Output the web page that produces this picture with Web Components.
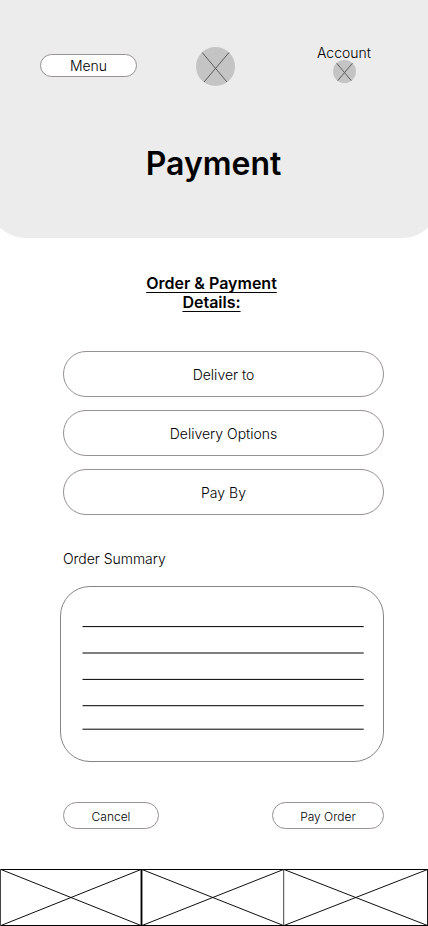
<!DOCTYPE html>
<html lang="en">
<head>
<meta charset="utf-8">
<title>Payment</title>
<style>
html,body{margin:0;padding:0;background:#fff}
body{font-family:Inter,"Liberation Sans",sans-serif;color:#000;overflow:hidden}
</style>
</head>
<body>
<payment-page></payment-page>
<script>
const define = (name, html) => customElements.define(name, class extends HTMLElement {
  constructor() {
    super();
    this.attachShadow({ mode: "open" }).innerHTML = html;
  }
});

define("pill-button", `
<style>
:host{display:block;box-sizing:border-box}
button{all:unset;box-sizing:border-box;display:flex;align-items:center;justify-content:center;width:100%;height:100%;border:1px solid #969193;border-radius:999px;background:#fff;font-weight:300;padding-top:var(--drop,0);white-space:nowrap}
</style><button><slot></slot></button>`);

define("crossed-circle", `
<style>
:host{display:block}
svg{display:block;width:100%;height:100%}
</style>
<svg viewBox="0 0 39 39"><circle cx="19.5" cy="19.5" r="19.5" fill="#c4c4c4"/><path d="M6.2 5.5L31 35M33 5.5L8 35" stroke="#5c5c5c" fill="none" vector-effect="non-scaling-stroke"/></svg>`);

define("page-header", `
<style>
:host{display:block;height:238px;margin:0 -10px;padding:0 10px;background:#ececec;border-radius:0 0 35px 35px}
nav{display:grid;grid-template-columns:97px 39px 56px;column-gap:59px;padding:45px 0 0 40px;height:102px;box-sizing:border-box;align-items:start}
pill-button{height:23px;margin-top:9px;font-size:14px}
.logo{width:39px;height:39px;margin-top:2px}
.account{margin:-1px 0 0 22px;width:56px;display:flex;flex-direction:column;align-items:center;font-size:14px;line-height:17px;font-weight:300}
.account crossed-circle{width:23px;height:23px;margin:-1px 0 0 1px}
h1{margin:42px 0 0;padding-right:1px;text-align:center;font-size:32px;line-height:40px;font-weight:600}
</style>
<nav><pill-button>Menu</pill-button><crossed-circle class="logo"></crossed-circle>
<div class="account"><span>Account</span><crossed-circle></crossed-circle></div></nav>
<h1><slot></slot></h1>`);

define("order-summary", `
<style>
:host{display:block}
h3{margin:0 0 0 3px;font-size:14px;line-height:17px;font-weight:300;letter-spacing:-.04px}
.card{box-sizing:border-box;width:324px;height:176px;margin-top:19px;border:1px solid #858585;border-radius:30px}
svg{display:block;width:322px;height:174px}
</style>
<h3><slot></slot></h3>
<div class="card"><svg viewBox="61 587 322 174"><path d="M82.5 626.6H363.7M82.5 653H363.7M82.5 679.4H363.7M82.5 705.7H363.7M82.5 729.2H363.7" stroke="#000"/></svg></div>`);

define("tab-placeholders", `
<style>
:host{display:block}
svg{display:block;width:428px;height:58px}
</style>
<svg viewBox="0 868 428 58" fill="none" stroke="#000"><path d="M0 869.5H428M0 925.5H428M141.5 869V926" stroke-width="1.1"/><path d="M.5 869V926M283.7 869V926" stroke="#444"/><path d="M141.5 869V926" stroke-width="1.8"/><path d="M427.6 869V926"/><path d="M1 869.5L141 925.5M1 925.5L141 869.5M142 869.5L283.5 925.5M142 925.5L283.5 869.5M284 869.5L427.5 925.5M284 925.5L427.5 869.5" stroke-width=".95"/></svg>`);

define("payment-page", `
<style>
:host{display:flex;flex-direction:column;width:428px;height:926px;overflow:hidden;background:#fff}
page-header{flex:none}
h2{margin:36px 0 0 -5px;text-align:center;font-size:16px;line-height:19px;font-weight:600;text-decoration:underline;text-decoration-thickness:1.3px;text-underline-offset:3px;text-decoration-skip-ink:none}
.options{display:grid;gap:13px;margin:39px 44px 0 63px}
.options pill-button{height:46px;font-size:14px;--drop:1px}
order-summary{margin:35px 0 0 60px}
.actions{display:flex;justify-content:space-between;margin:40px 44px 0 63px;font-size:12px}
.actions pill-button{height:27px;width:96px;--drop:1px}
.actions pill-button:last-child{width:112px}
tab-placeholders{margin-top:auto}
</style>
<page-header>Payment</page-header>
<h2>Order &amp; Payment<br>Details:</h2>
<div class="options"><pill-button>Deliver to</pill-button><pill-button>Delivery Options</pill-button><pill-button>Pay By</pill-button></div>
<order-summary>Order Summary</order-summary>
<div class="actions"><pill-button>Cancel</pill-button><pill-button>Pay Order</pill-button></div>
<tab-placeholders></tab-placeholders>`);
</script>
</body>
</html>
